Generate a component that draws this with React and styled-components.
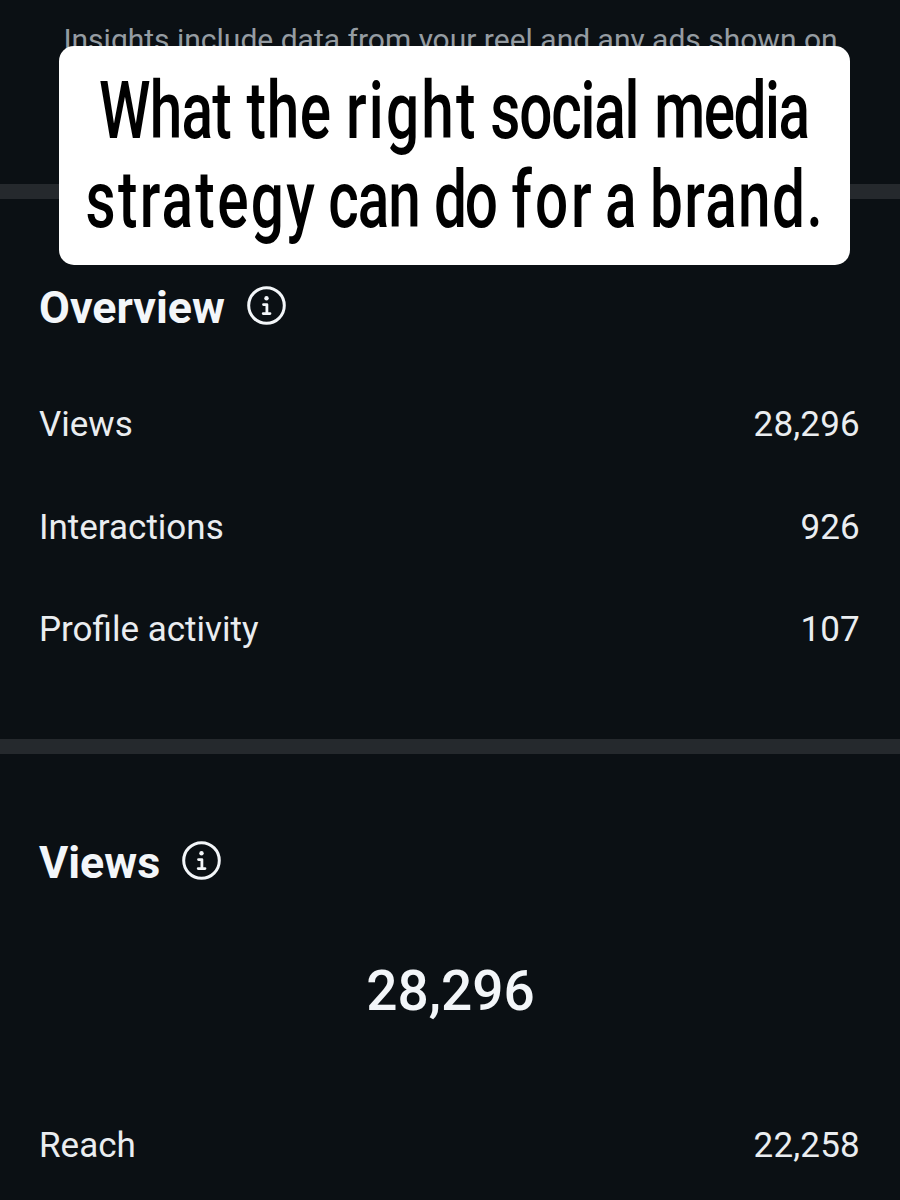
import React from "react";
import styled, { createGlobalStyle } from "styled-components";

const GlobalStyle = createGlobalStyle`
  body {
    margin: 0;
    background-color: #0b1014;
    font-family: Roboto, "Liberation Sans", sans-serif;
  }
`;

const Screen = styled.main`
  position: relative;
  display: flex;
  flex-direction: column;
  width: 900px;
  height: 1200px;
  overflow: hidden;
  background-color: #0b1014;
  color: #f3f6f9;
`;

const Notice = styled.p`
  box-sizing: border-box;
  height: 184px;
  flex-shrink: 0;
  margin: 0;
  padding: 22px 0 0 1px;
  font-size: 30px;
  line-height: 36px;
  text-align: center;
  white-space: nowrap;
  color: #959ca2;
`;

const Divider = styled.div`
  height: 15px;
  flex-shrink: 0;
  background-color: #25292d;
`;

const Section = styled.section`
  box-sizing: border-box;
  flex-shrink: 0;
  height: ${(props) => props.$height}px;
  padding: 82px 40px 0 39px;
`;

const Heading = styled.div`
  display: flex;
  align-items: center;
  gap: 22px;
  height: 52px;

  svg {
    margin-bottom: 3px;
  }
`;

const Title = styled.h2`
  margin: 0;
  font-size: 44.8px;
  font-weight: 700;
  line-height: 53px;
`;

const Stats = styled.div`
  padding-top: ${(props) => props.$offset}px;
`;

const Row = styled.div`
  display: flex;
  align-items: center;
  justify-content: space-between;
  height: 102.7px;
  font-size: 35px;
  color: #eaedf0;
`;

const Value = styled.span`
  letter-spacing: 0.2px;
`;

const Total = styled.div`
  padding: 70px 0 0 2px;
  font-size: 55px;
  font-weight: 500;
  line-height: 66px;
  text-align: center;
`;

// Sits over the top of the insights screen
const Caption = styled.div`
  position: absolute;
  top: 46px;
  left: 59px;
  box-sizing: border-box;
  display: flex;
  flex-direction: column;
  align-items: center;
  width: 791px;
  height: 219px;
  padding-top: 21px;
  border-radius: 15px;
  background-color: #fff;
  color: #000;
`;

// Roboto squeezed into a tall condensed face
const CaptionLine = styled.div`
  display: flex;
  gap: ${(props) => props.$gap}px;
  font-size: 79px;
  font-weight: 500;
  line-height: 89px;
  white-space: nowrap;
  transform: scaleX(0.74);
`;

const Word = styled.span`
  letter-spacing: ${(props) => props.$spacing}px;
  margin-right: ${(props) => -props.$spacing}px;
`;

const InfoIcon = () => (
  <svg width="39" height="39" viewBox="0 0 39 39" fill="none">
    <circle cx="19.5" cy="19.5" r="17.8" stroke="#f3f6f9" strokeWidth="3" />
    <circle cx="19.5" cy="12.2" r="2.2" fill="#f3f6f9" />
    <path
      d="M16.5 18.6H19.9V27.6M16.2 27.6H23"
      stroke="#f3f6f9"
      strokeWidth="2.8"
      strokeLinecap="round"
      strokeLinejoin="round"
    />
  </svg>
);

const overview = [
  { label: "Views", value: "28,296" },
  { label: "Interactions", value: "926" },
  { label: "Profile activity", value: "107" },
];

const captionLines = [
  {
    gap: 20,
    words: [
      { text: "What", spacing: -1 },
      { text: "the", spacing: 1 },
      { text: "right", spacing: 3 },
      { text: "social", spacing: -1.6 },
      { text: "media", spacing: -2 },
    ],
  },
  {
    gap: 18,
    words: [
      { text: "strategy", spacing: 3.1 },
      { text: "can", spacing: -1.3 },
      { text: "do", spacing: -3 },
      { text: "for", spacing: 4 },
      { text: "a", spacing: 0 },
      { text: "brand.", spacing: 1.9 },
    ],
  },
];

const SectionHeading = ({ children }) => (
  <Heading>
    <Title>{children}</Title>
    <InfoIcon />
  </Heading>
);

const StatRow = ({ label, value }) => (
  <Row>
    <span>{label}</span>
    <Value>{value}</Value>
  </Row>
);

const App = () => {
  return (
    <>
      <GlobalStyle />
      <Screen>
        <Notice>Insights include data from your reel and any ads shown on</Notice>
        <Divider />
        <Section $height={540}>
          <SectionHeading>Overview</SectionHeading>
          <Stats $offset={40}>
            {overview.map((item) => (
              <StatRow key={item.label} {...item} />
            ))}
          </Stats>
        </Section>
        <Divider />
        <Section $height={446}>
          <SectionHeading>Views</SectionHeading>
          <Total>28,296</Total>
          <Stats $offset={70}>
            <StatRow label="Reach" value="22,258" />
          </Stats>
        </Section>
        <Caption>
          {captionLines.map((line, index) => (
            <CaptionLine key={index} $gap={line.gap}>
              {line.words.map((word) => (
                <Word key={word.text} $spacing={word.spacing}>
                  {word.text}
                </Word>
              ))}
            </CaptionLine>
          ))}
        </Caption>
      </Screen>
    </>
  );
};

export default App;
